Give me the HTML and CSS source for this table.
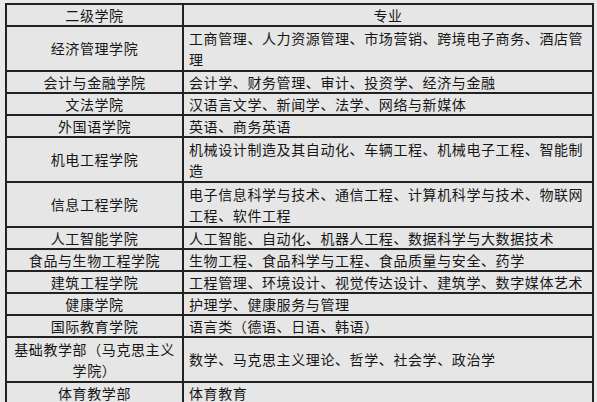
FILE: index.html
```html
<!DOCTYPE html>
<html lang="zh">
<head>
<meta charset="utf-8">
<title>二级学院与专业</title>
<link rel="stylesheet" href="styles.css">
</head>
<body>
<table class="majors">
  <tr class="one"><td class="college">二级学院</td><td class="head">专业</td></tr>
  <tr class="two"><td class="college">经济管理学院</td><td class="list">工商管理、人力资源管理、市场营销、跨境电子商务、酒店管理</td></tr>
  <tr class="one"><td class="college">会计与金融学院</td><td class="list">会计学、财务管理、审计、投资学、经济与金融</td></tr>
  <tr class="one"><td class="college">文法学院</td><td class="list">汉语言文学、新闻学、法学、网络与新媒体</td></tr>
  <tr class="one"><td class="college">外国语学院</td><td class="list">英语、商务英语</td></tr>
  <tr class="two"><td class="college">机电工程学院</td><td class="list">机械设计制造及其自动化、车辆工程、机械电子工程、智能制造</td></tr>
  <tr class="two"><td class="college">信息工程学院</td><td class="list">电子信息科学与技术、通信工程、计算机科学与技术、物联网工程、软件工程</td></tr>
  <tr class="one"><td class="college">人工智能学院</td><td class="list">人工智能、自动化、机器人工程、数据科学与大数据技术</td></tr>
  <tr class="one"><td class="college">食品与生物工程学院</td><td class="list">生物工程、食品科学与工程、食品质量与安全、药学</td></tr>
  <tr class="one"><td class="college">建筑工程学院</td><td class="list">工程管理、环境设计、视觉传达设计、建筑学、数字媒体艺术</td></tr>
  <tr class="one"><td class="college">健康学院</td><td class="list">护理学、健康服务与管理</td></tr>
  <tr class="one"><td class="college">国际教育学院</td><td class="list">语言类（德语、日语、韩语）</td></tr>
  <tr class="two"><td class="college">基础教学部（马克思主义学院）</td><td class="list">数学、马克思主义理论、哲学、社会学、政治学</td></tr>
  <tr class="one"><td class="college">体育教学部</td><td class="list">体育教育</td></tr>
</table>
</body>
</html>
```
FILE: styles.css
```css
html, body {
  background: #e9e9e9;
}
body {
  margin: 3px 0 0 5px;
  font-family: "Noto Sans CJK SC", "Noto Sans", sans-serif;
  font-size: 14px;
  letter-spacing: 0.6px;
  line-height: 20px;
  color: #161616;
}
.majors {
  width: 589px;
  table-layout: fixed;
  border-collapse: separate;
  border-spacing: 0;
  border: 1px solid #222;
  background: #e6e6e6;
}
.majors td {
  border: 1px solid #222;
  padding: 0;
  vertical-align: middle;
}
.majors tr.one { height: 22px; }
.majors tr.two { height: 45px; line-height: 21px; }
.college {
  width: 171px;
  padding: 0 2px !important;
  text-align: center;
}
.head {
  text-align: center;
}
.list {
  padding: 0 3px 0 5px !important;
  text-align: left;
}
```
